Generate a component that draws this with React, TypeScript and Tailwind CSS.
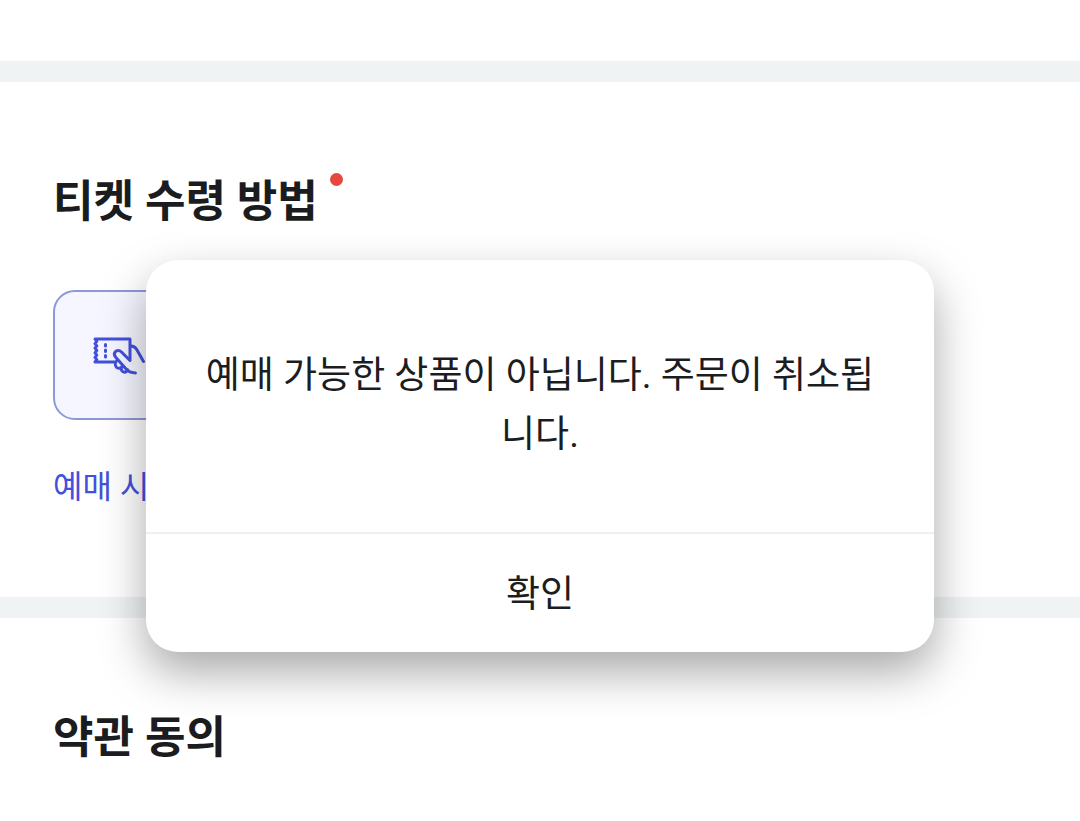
import { useState } from 'react';

const FONT = "font-[Roboto,'Noto_Sans_CJK_KR',sans-serif]";

function TicketIcon() {
  return (
    <svg
      width="52"
      height="40"
      viewBox="0 0 52 40"
      fill="none"
      stroke="#4350dc"
      strokeWidth="3"
      strokeLinejoin="round"
      strokeLinecap="round"
      aria-hidden="true"
    >
      <path d="M37 24.5V4H2l1.8 2.3L2 8.6l1.8 2.3L2 13.2l1.8 2.3L2 17.8l1.8 2.3L2 22.4l1.8 2.3L2 27h20" />
      <path d="M12.5 9.5v1.4M12.5 15v1.4M12.5 20.5v1.4" />
      <path d="M37 25.5l-8.5-8.5c-2.2-2-4.8-1.7-6.2-.2-1.5 1.7-1 3.9.6 5.7L34 35c2 1.9 4.4 2.8 8.5 2.9" />
      <path d="M24 25.5c-2 2-2.2 5-.6 6.8 1.7 1.7 4.6 1.2 5.9-1.1" />
      <path d="M29.3 31.2c-1.5 1.8-1.4 4.3.3 5.4 1.8 1.2 4.3.4 5-1.8" />
      <path d="M38 11c2.5.1 4.2 1.1 5.6 3.3L50.5 26.5" />
    </svg>
  );
}

export default function App() {
  const [open, setOpen] = useState(true);

  return (
    <div className={`relative min-h-screen overflow-hidden bg-white text-[#1b1c20] ${FONT}`}>
      <main>
        <section className="border-t-[21px] border-[#eff3f4] mt-[61px] px-[53px] pt-[88px] pb-[86px]">
          <h2 id="receive-title" className="flex items-start gap-3 text-[44px] leading-[64px] font-bold">
            티켓 수령 방법
            <span className="mt-[3px] size-[13px] rounded-full bg-[#e8473d]" />
          </h2>
          <button
            type="button"
            aria-labelledby="receive-title"
            className="mt-[56px] flex h-[130px] w-1/2 items-center rounded-[22px] border-2 border-[#8d98d6] bg-[#f5f6ff] px-[38px]"
          >
            <TicketIcon />
          </button>
          <p className="mt-[43px] text-[32px] leading-[48px] text-[#4350dc]">예매 시</p>
        </section>

        <section className="border-t-[21px] border-[#eff3f4] px-[53px] pt-[88px]">
          <h2 className="text-[44px] leading-[64px] font-bold">약관 동의</h2>
        </section>
      </main>

      {/* 안내 모달 */}
      {open && (
        <div
          role="alertdialog"
          aria-modal="true"
          aria-describedby="alert-message"
          className="absolute inset-x-0 top-[260px] mx-auto w-[73%] overflow-hidden rounded-[32px] bg-white text-center text-[37px] text-[#1c1d1f] shadow-[0_20px_46px_rgba(0,0,0,0.34)]"
        >
          <p id="alert-message" className="px-[58px] pt-[86px] pb-[68px] leading-[59px]">
            예매 가능한 상품이 아닙니다. 주문이 취소됩니다.
          </p>
          <button
            type="button"
            onClick={() => setOpen(false)}
            className="h-[120px] w-full border-t-2 border-[#f0f0f0] pt-[3px]"
          >
            확인
          </button>
        </div>
      )}
    </div>
  );
}
